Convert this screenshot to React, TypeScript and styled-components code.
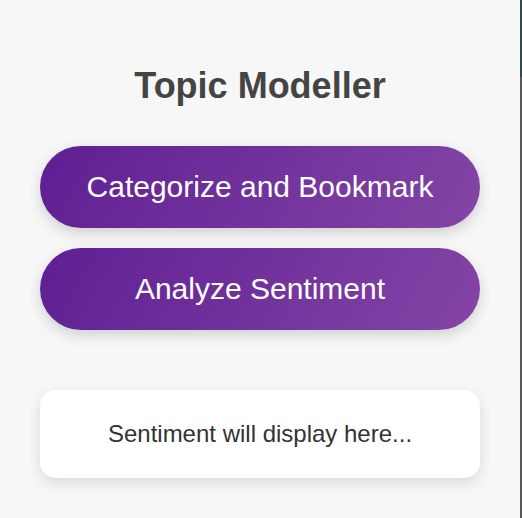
import styled, { createGlobalStyle } from "styled-components";

const GlobalStyle = createGlobalStyle`
  html, body {
    margin: 0;
    padding: 0;
    background: #f7f7f7;
  }
  body {
    width: 520px;
    min-height: 100vh;
    border-right: 2px solid #55585a;
    border-image: linear-gradient(to bottom, #2d4a50 0, #2d4a50 78px, #55585a 78px) 1;
    font-family: "Liberation Sans", Arial, sans-serif;
  }
`;

const App = () => {
  // ---------------------------------------------------------------------------
  const buttons = ["Categorize and Bookmark", "Analyze Sentiment"];
  // ---------------------------------------------------------------------------
  return (
    <>
      <GlobalStyle />
      <Wrap>
        <Title>Topic Modeller</Title>
        <ButtonList>
          {buttons.map((label) => (
            <ActionButton key={label}>{label}</ActionButton>
          ))}
        </ButtonList>
        <ResultBox>Sentiment will display here...</ResultBox>
      </Wrap>
    </>
  );
};

const Wrap = styled.div`
  display: flex;
  flex-direction: column;
  padding: 65px 40px 0;
`;
const Title = styled.h1`
  margin: 0 0 40px;
  text-align: center;
  font-size: 36px;
  line-height: 41px;
  font-weight: bold;
  color: #444444;
`;
const ButtonList = styled.div`
  display: flex;
  flex-direction: column;
  gap: 20px;
  margin-bottom: 60px;
`;
const ActionButton = styled.button`
  height: 82px;
  border: none;
  border-radius: 41px;
  background: linear-gradient(120deg, #5f1f93 0%, #8445a6 100%);
  color: #ffffff;
  font-family: "Liberation Sans", Arial, sans-serif;
  font-size: 30px;
  cursor: pointer;
  box-shadow: 0 5px 14px rgba(0, 0, 0, 0.16);
`;
const ResultBox = styled.div`
  height: 88px;
  display: flex;
  align-items: center;
  justify-content: center;
  background: #ffffff;
  border-radius: 16px;
  font-size: 24px;
  color: #333333;
  box-shadow: 0 5px 14px rgba(0, 0, 0, 0.12);
`;

export default App;
